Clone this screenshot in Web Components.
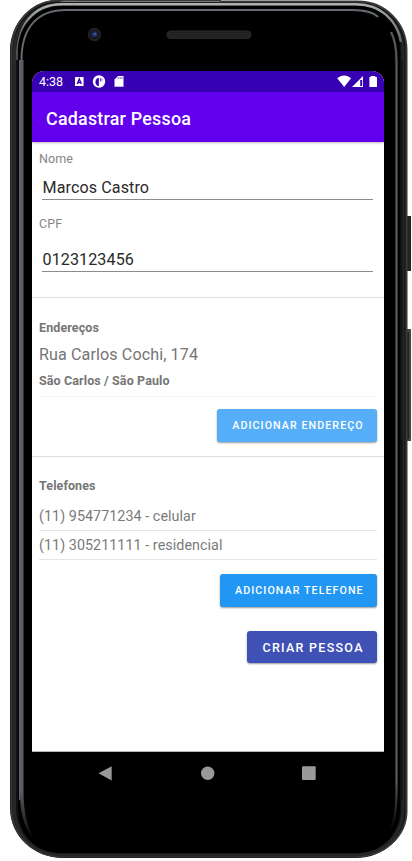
<!DOCTYPE html>
<html lang="pt-BR">
<head>
<meta charset="utf-8">
<title>Cadastrar Pessoa</title>
<style>
html,body{margin:0;background:#fff;font-family:Roboto,"Noto Sans",sans-serif;overflow:hidden}
</style>
</head>
<body>
<phone-device>
  <status-bar>4:38</status-bar>
  <app-bar>Cadastrar Pessoa</app-bar>
  <form-section style="height:155px">
    <text-label style="margin-top:8px">Nome</text-label>
    <text-input style="height:33px">Marcos Castro</text-input>
    <text-label style="margin-top:15px">CPF</text-label>
    <text-input style="height:40px">0123123456</text-input>
  </form-section>
  <form-section ruled style="height:159px">
    <text-label strong style="margin-top:21px">Endereços</text-label>
    <address-item>Rua Carlos Cochi, 174<span slot="city">São Carlos / São Paulo</span></address-item>
    <raised-button style="--bg:#55aef7;--w:160px;margin-top:12px">Adicionar Endereço</raised-button>
  </form-section>
  <form-section ruled style="height:295px">
    <text-label strong style="margin-top:20px">Telefones</text-label>
    <phone-item style="margin-top:8px;height:28px">(11) 954771234 - celular</phone-item>
    <phone-item style="height:28px">(11) 305211111 - residencial</phone-item>
    <raised-button style="--bg:#2196f3;--w:157px;--lh:34px;margin-top:14px">Adicionar Telefone</raised-button>
    <raised-button style="--bg:#3f51b5;--w:130px;--fs:12.5px;--ls:1.28px;margin-top:24px">Criar Pessoa</raised-button>
  </form-section>
  <nav-bar slot="nav"></nav-bar>
</phone-device>
<script>
const element = (name, html) => customElements.define(name, class extends HTMLElement {
  constructor() {
    super();
    const t = document.createElement('template');
    t.innerHTML = html;
    this.attachShadow({mode: 'open'}).append(t.content.cloneNode(true));
  }
});

element('phone-device', `<style>
:host{display:block;position:relative;width:412px;height:861px}
svg{position:absolute;inset:0}
.body{position:relative;box-sizing:border-box;height:861px;padding:71px 28px 0 32px}
.screen{height:680px;overflow:hidden;background:#fff;border-radius:12px 12px 0 0;border-bottom:1px solid #b5b5b5}
</style>
<svg width="412" height="861" viewBox="0 0 412 861">
  <defs>
    <linearGradient id="rim" gradientUnits="userSpaceOnUse" x1="0" y1="0" x2="0" y2="70"><stop offset="0" stop-color="#b5bbb9"/><stop offset=".3" stop-color="#888c8b"/><stop offset="1" stop-color="#333"/></linearGradient>
    <linearGradient id="fade" gradientUnits="userSpaceOnUse" x1="0" y1="790" x2="0" y2="842"><stop offset="0" stop-color="#595d66"/><stop offset="1" stop-color="#000"/></linearGradient>
    <linearGradient id="fadeR" gradientUnits="userSpaceOnUse" x1="0" y1="780" x2="0" y2="830"><stop offset="0" stop-color="#56565c"/><stop offset="1" stop-color="#000"/></linearGradient>
  </defs>
  <path d="M406 216h5v55h-5z" fill="#242424"/><path d="M406 329h5v112h-5z" fill="#444"/><path d="M407 332h2v107h-2z" fill="#222"/>
  <path d="M59 0H220V1H358C385 1 407 23 407 50V811C407 837 384 858 356 858H63C34 858 10 836 10 808V51C10 23 31 0 59 0Z" fill="#111"/>
  <path d="M59 .5H220V1.5H358C385 1.5 406.500 23 406.500 50V811C406.500 836 384 856.500 356 856.500H63C34 856.500 11.500 836 11.500 808V51C11.500 23 32 .5 59 .5Z" fill="none" stroke="#393939" stroke-width="2"/>
  <path d="M60 2H220V1H95C75 1 59 0 60 2Z" fill="#777"/>
  <path d="M14.500 808V52C14.500 25 34 4 62 4H356C382 4 403 25 403 52V808C403 836 383 855 355 855H62C35 855 14.500 836 14.500 808Z" fill="none" stroke="#272727" stroke-width="3"/>
  <path d="M17 60C17 24 34 4.300 62 4.300H356C380 4.300 397 20 401 42" fill="none" stroke="url(#rim)" stroke-width="2.500"/>
  <path d="M18 50V808C18 836 36 853 62 853H355C381 853 400 836 400 808V50C400 25 383 6 356 6H64C36 6 18 25 18 50Z" fill="#000"/>
  <path d="M21.500 788V60C21.500 27 38 10 66 10H352C365 10 373 12 378 17" fill="none" stroke="#656a70" stroke-width="2"/>
  <path d="M20 60V795C20 818 27 833 36 842C27 829 23.500 811 23.500 790V60Z" fill="url(#fade)"/>
  <path d="M19.500 60V800" stroke="#60656b" stroke-width="1"/>
  <path d="M391 32C396 41 396.500 52 396.500 62V790C396.500 810 395 821 390.500 829" fill="none" stroke="url(#fadeR)" stroke-width="2.300"/>
  <path d="M16.500 60V800M402 60V800" stroke="#111"/>
  <circle cx="94.500" cy="34.500" r="6.700" fill="#202023"/><circle cx="94.500" cy="34.500" r="4.300" fill="#121521"/><circle cx="94.500" cy="34.200" r="3" fill="#202f5d"/><circle cx="95" cy="34" r="1.200" fill="#46588c"/>
  <rect x="166.500" y="30.500" width="85" height="8.500" rx="4.200" fill="#252727"/><path d="M170 32.500H248M170 34.700H248M170 37H248" stroke="#181818" stroke-dasharray="1 1"/>
</svg>
<div class="body"><div class="screen"><slot></slot></div><slot name="nav"></slot></div>`);

element('status-bar', `<style>
:host{display:flex;align-items:center;height:21px;background:#3700b3;color:#fff;font-size:12.5px;line-height:21px;padding:0 6px 0 7px}
.time{flex:none;width:35px;white-space:nowrap}.icons{flex:1;height:21px;display:flex;justify-content:space-between}
svg{display:block}
</style><span class="time"><slot></slot></span>
<span class="icons">
<svg width="50" height="21" viewBox="74 71 50 21"><rect x="75" y="77" width="8.600" height="9" rx=".6" fill="#fff"/><path d="M77.200 84L79.300 79L81.400 84M78 82.500H80.600" fill="none" stroke="#3700b3" stroke-width="1.300"/>
<circle cx="99" cy="81.500" r="6.200" fill="#fff"/><path d="M98.900 77.700V86.300A4.400 4.400 0 0 1 98.900 77.700ZM100.300 78h1v3.500h-1zM102.300 78.600A2.500 2.500 0 0 1 102.300 81.300Z" fill="#3700b3"/>
<path d="M118 76H123.500V86.700H114.500V79.500Z" fill="#fff"/><path d="M118.300 77.300v1.700M120.200 77.300v1.700M122 77.300v1.700" stroke="#3700b3" stroke-width=".7"/></svg>
<svg width="42" height="21" viewBox="336 71 42 21"><path d="M337.200 78.300C341 74.400 347.300 74.400 351.100 78.300L344.200 87Z" fill="#fff"/>
<path d="M363 76V87H352Z" fill="#fff"/><path d="M360.200 80h2v6h-2z" fill="#3700b3"/>
<path d="M370.800 76H375.200V77H377V87H369.400V77H370.800Z" fill="#fff"/></svg></span>`);

element('app-bar', `<style>
:host{display:block;position:relative;height:50px;box-sizing:border-box;padding-left:14px;background:#6200ee;color:#fff;font-size:17.9px;font-weight:500;letter-spacing:.21px;line-height:53px;box-shadow:0 1px 2px #0004;white-space:nowrap}
</style><slot></slot>`);

element('form-section', `<style>
:host{display:flex;flex-direction:column;box-sizing:border-box;padding:0 7px}
:host([ruled]){border-top:1px solid #dedede}
</style><slot></slot>`);

element('text-label', `<style>
:host{display:block;height:17px;line-height:17px;font-size:12.5px;letter-spacing:.1px;color:#858585}
:host([strong]){font-weight:700;color:#757575}
</style><slot></slot>`);

element('text-input', `<style>
:host{display:flex;align-items:flex-end;box-sizing:border-box;margin:0 4px 0 3px;border-bottom:1px solid #8c8c8c;padding-left:.5px;font-size:16.1px;letter-spacing:.1px;line-height:22px;color:#2a2a2a}
</style><slot></slot>`);

element('address-item', `<style>
:host{display:block;height:60px;border-bottom:1px solid #f3f3f3;color:#757575;font-size:16.1px;letter-spacing:.11px}
.street{height:21px;line-height:22px;padding-top:8px}
.city{height:17px;line-height:17px;padding-top:7px;font-size:12.5px;font-weight:700}
</style><div class="street"><slot></slot></div><div class="city"><slot name="city"></slot></div>`);

element('phone-item', `<style>
:host{display:block;border-bottom:1px solid #e6e6e6;font-size:14.3px;letter-spacing:.06px;line-height:29px;color:#7a7a7a}
</style><slot></slot>`);

element('raised-button', `<style>
:host{display:flex;align-self:flex-end;flex:none;margin-right:.5px}
button{all:unset;box-sizing:border-box;width:var(--w);height:32.5px;border-radius:3px;background:var(--bg);color:#fff;font-size:var(--fs,10.7px);font-weight:500;letter-spacing:var(--ls,1.06px);line-height:var(--lh,33px);text-align:right;padding-right:12.8px;text-transform:uppercase;white-space:nowrap;box-shadow:0 1px 2px #0006}
</style><button><slot></slot></button>`);

element('nav-bar', `<style>
:host{display:flex;justify-content:center;height:44px}
svg{display:block}
</style><svg width="352" height="44" viewBox="32 752 352 44"><path d="M98.500 773.300L111.700 766.200V780.500Z" fill="#999"/><circle cx="207.700" cy="773.300" r="6.700" fill="#999"/><rect x="302" y="766.300" width="13.700" height="13.700" rx="1" fill="#999"/></svg>`);
</script>
</body>
</html>
